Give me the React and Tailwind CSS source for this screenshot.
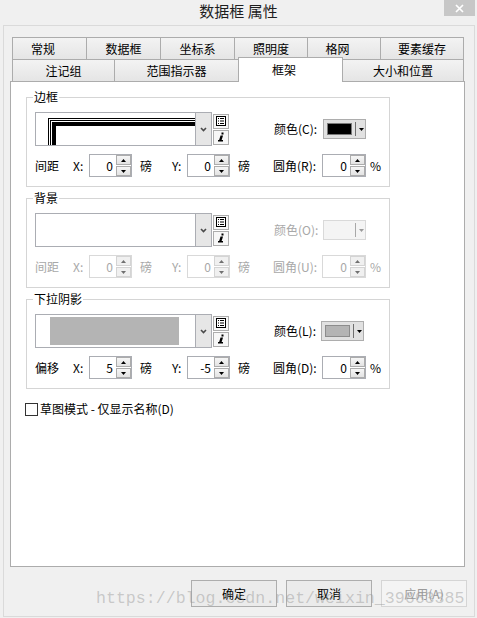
import React from "react";

// ─── Small drawing bits ───────────────────────────────────────────────────────
function Tri({ down = false, color = "#000" }) {
  return (
    <svg width="5" height="3" viewBox="0 0 5 3" className="block">
      <polygon points={down ? "0,0 5,0 2.5,3" : "0,3 5,3 2.5,0"} fill={color} />
    </svg>
  );
}

function Chevron() {
  return (
    <svg width="7" height="5" viewBox="0 0 7 5" className="block">
      <polyline points="1,1 3.5,3.5 6,1" fill="none" stroke="#4a4a4a" strokeWidth="1.6" />
    </svg>
  );
}

function ListIcon() {
  return (
    <svg width="10" height="10" viewBox="0 0 10 10" className="block">
      <rect x="0.5" y="0.5" width="9" height="9" fill="#fff" stroke="#000" />
      <rect x="2" y="2" width="1" height="1" fill="#000" />
      <rect x="4" y="2" width="4" height="1" fill="#000" />
      <rect x="2" y="4.5" width="1" height="1" fill="#000" />
      <rect x="4" y="4.5" width="4" height="1" fill="#000" />
      <rect x="2" y="7" width="1" height="1" fill="#000" />
      <rect x="4" y="7" width="4" height="1" fill="#000" />
    </svg>
  );
}

function InfoIcon() {
  return (
    <svg width="10" height="10" viewBox="0 0 10 10" className="block">
      <rect x="5.5" y="0.5" width="2" height="2" fill="#000" />
      <polygon points="4.5,3.5 7,3.5 5.6,8 3.1,8" fill="#000" />
      <rect x="2" y="8" width="5" height="1.5" fill="#000" />
    </svg>
  );
}

// ─── Controls ─────────────────────────────────────────────────────────────────
function SpinBox({ value, disabled = false, w = "w-[43px]" }) {
  return (
    <div className={`flex h-[23px] ${w} bg-white border ${disabled ? "border-[#d9d9d9]" : "border-[#abadb3]"}`}>
      <div className={`flex-1 pr-[3px] text-right leading-[21px] ${disabled ? "text-[#a8a8a8]" : "text-black"}`}>
        {value}
      </div>
      <div className="flex w-[15px] flex-col gap-px">
        <div className={`flex flex-1 items-center justify-center border ${disabled ? "border-[#d4d4d4] bg-[#f0f0f0]" : "border-[#acacac] bg-gradient-to-b from-[#f6f6f6] to-[#e3e3e3]"}`}>
          <Tri color={disabled ? "#707070" : "#000"} />
        </div>
        <div className={`flex flex-1 items-center justify-center border ${disabled ? "border-[#d4d4d4] bg-[#f0f0f0]" : "border-[#acacac] bg-gradient-to-b from-[#f6f6f6] to-[#e3e3e3]"}`}>
          <Tri down color={disabled ? "#707070" : "#000"} />
        </div>
      </div>
    </div>
  );
}

function Combo({ children }) {
  return (
    <div className="flex items-center">
      <div className="flex h-[34px] w-[177px] border border-[#abadb3] bg-white">
        <div className="flex-1 overflow-hidden">{children}</div>
        <div className="flex w-[16px] items-center justify-center border-l border-[#abadb3] bg-[#e6e6e6]">
          <Chevron />
        </div>
      </div>
      {/* symbol picker + properties */}
      <div className="ml-px flex flex-col gap-px">
        <div className="flex h-[15px] w-[16px] items-center justify-center border border-[#adadad] bg-[#f7f7f7]">
          <ListIcon />
        </div>
        <div className="flex h-[15px] w-[16px] items-center justify-center border border-[#adadad] bg-[#f7f7f7]">
          <InfoIcon />
        </div>
      </div>
    </div>
  );
}

function ColorButton({ swatch = "", disabled = false }) {
  return (
    <div className={`flex h-[20px] w-[43px] items-center border pl-[3px] ${disabled ? "border-[#d9d9d9] bg-[#f4f4f4]" : "border-[#adadad] bg-[#e1e1e1]"}`}>
      <div className={`h-[12px] w-[25px] ${swatch}`} />
      <div className={`ml-[3px] h-[14px] w-px ${disabled ? "bg-[#a8a8a8]" : "bg-[#6e6e6e]"}`} />
      <div className="ml-[3px]">
        <Tri down color={disabled ? "#9a9a9a" : "#000"} />
      </div>
    </div>
  );
}

function Group({ title, className = "", children }) {
  return (
    <fieldset className={`w-[364px] border border-[#d5d5d5] px-[8px] pt-[7px] pb-[9px] ${className}`}>
      <legend className="-ml-[2px] px-px leading-[16px] text-black">{title}</legend>
      {children}
    </fieldset>
  );
}

function OffsetRow({ name, x, y, cornerLabel, disabled = false }) {
  const tone = disabled ? "text-[#a8a8a8]" : "text-black";
  return (
    <div className={`mt-[8px] flex h-[23px] items-center whitespace-nowrap ${tone}`}>
      <span className="w-[38px]">{name}</span>
      <span className="w-[16px]">X:</span>
      <SpinBox value={x} disabled={disabled} />
      <span className="ml-[8px] w-[12px]">磅</span>
      <span className="ml-[20px] w-[15px]">Y:</span>
      <SpinBox value={y} disabled={disabled} />
      <span className="ml-[8px] w-[12px]">磅</span>
      <span className="ml-[23px] w-[49px]">{cornerLabel}</span>
      <SpinBox value="0" disabled={disabled} w="w-[44px]" />
      <span className="ml-[4px]">%</span>
    </div>
  );
}

// ─── Tabs ─────────────────────────────────────────────────────────────────────
const topTabs = [
  { label: "常规", w: "w-[75px] pr-[13px]" },
  { label: "数据框", w: "w-[75px]" },
  { label: "坐标系", w: "w-[75px]" },
  { label: "照明度", w: "w-[74px]" },
  { label: "格网", w: "w-[74px] pr-[13px]" },
  { label: "要素缓存", w: "w-[84px]" },
];

const bottomTabs = [
  { label: "注记组", w: "w-[103px]" },
  { label: "范围指示器", w: "w-[125px]" },
  { label: "框架", w: "w-[105px] pr-[13px]", selected: true },
  { label: "大小和位置", w: "w-[122px]" },
];

function Tab({ label, w, selected, first }) {
  if (selected) {
    return (
      <div className={`relative z-10 -ml-px -mt-[2px] flex h-[25px] items-center justify-center border border-b-0 border-[#acacac] bg-white pb-px leading-[16px] ${w}`}>
        {label}
      </div>
    );
  }
  return (
    <div className={`${first ? "" : "-ml-px"} flex h-[22px] items-center justify-center border border-b-0 border-[#acacac] bg-gradient-to-b from-[#f3f3f3] to-[#e5e5e5] leading-[16px] ${w}`}>
      {label}
    </div>
  );
}

export default function App() {
  return (
    <div className="relative h-[618px] w-[477px] overflow-hidden bg-[#f0f0f0] font-['Noto_Sans_CJK_SC','Liberation_Sans',sans-serif] text-[12px] text-black">
      {/* Title bar */}
      <div className="relative flex h-[25px] items-start justify-center">
        <div className="text-[15px] leading-[22px] text-[#1e1e1e]">数据框 属性</div>
        <div className="absolute right-[2px] top-0 flex h-[16px] w-[31px] items-center justify-center bg-[#c7c7c7]">
          <svg width="9" height="9" viewBox="0 0 9 9" className="block">
            <path d="M1 1L8 8M8 1L1 8" stroke="#fff" strokeWidth="1.7" />
          </svg>
        </div>
      </div>

      {/* Window body */}
      <div className="ml-[3px] h-[592px] w-[472px] border border-[#dadada] pl-[6px] pt-[11px]">
        <div className="ml-[2px] flex h-[22px]">
          {topTabs.map((t, i) => (
            <Tab key={t.label} {...t} first={i === 0} />
          ))}
        </div>
        <div className="ml-[2px] flex h-[22px] items-start">
          {bottomTabs.map((t, i) => (
            <Tab key={t.label} {...t} first={i === 0} />
          ))}
        </div>

        {/* Tab page */}
        <div className="h-[486px] w-[455px] border border-[#acacac] bg-white pl-[15px] pt-[7px]">
          <Group title="边框">
            <div className="flex h-[34px] items-center whitespace-nowrap">
              <Combo>
                <svg width="159" height="32" className="block">
                  <rect x="12" y="5" width="147" height="1" fill="#000" />
                  <rect x="12" y="5" width="1" height="27" fill="#000" />
                  <rect x="14" y="7" width="145" height="1" fill="#000" />
                  <rect x="14" y="7" width="1" height="25" fill="#000" />
                  <rect x="16" y="9" width="143" height="4" fill="#000" />
                  <rect x="16" y="9" width="4" height="23" fill="#000" />
                </svg>
              </Combo>
              <span className="ml-[45px] w-[49px]">颜色(C):</span>
              <ColorButton swatch="border border-[#7a7a7a] bg-black" />
            </div>
            <OffsetRow name="间距" x="0" y="0" cornerLabel="圆角(R):" />
          </Group>

          <Group title="背景" className="mt-[3px]">
            <div className="flex h-[34px] items-center whitespace-nowrap">
              <Combo />
              <span className="ml-[45px] w-[49px] text-[#a8a8a8]">颜色(O):</span>
              <ColorButton disabled />
            </div>
            <OffsetRow name="间距" x="0" y="0" cornerLabel="圆角(U):" disabled />
          </Group>

          <Group title="下拉阴影" className="mt-[3px]">
            <div className="flex h-[34px] items-center whitespace-nowrap">
              <Combo>
                <div className="ml-[14px] mt-[2px] h-[28px] w-[129px] bg-[#b4b4b4]" />
              </Combo>
              <span className="ml-[45px] w-[47px]">颜色(L):</span>
              <ColorButton swatch="border border-[#8c8c8c] bg-[#b4b4b4]" />
            </div>
            <OffsetRow name="偏移" x="5" y="-5" cornerLabel="圆角(D):" />
          </Group>

          <label className="-ml-px mt-[12px] flex h-[16px] items-center whitespace-nowrap">
            <span className="h-[13px] w-[13px] border border-[#333333] bg-white" />
            <span className="ml-[2px] leading-[16px]">草图模式 - 仅显示名称(D)</span>
          </label>
        </div>

        {/* Dialog buttons */}
        <div className="mt-[13px] flex justify-end gap-[9px] pr-[7px]">
          <button className="h-[27px] w-[86px] border border-[#adadad] bg-[#ebebeb] leading-[16px]">确定</button>
          <button className="h-[27px] w-[86px] border border-[#adadad] bg-[#ebebeb] leading-[16px]">取消</button>
          <button className="h-[27px] w-[86px] border border-[#d5d5d5] bg-[#f4f4f4] leading-[16px] text-[#9a9a9a]">应用(A)</button>
        </div>
      </div>

      {/* Watermark */}
      <div className="pointer-events-none absolute left-[96px] top-[589px] whitespace-nowrap font-['Liberation_Mono',monospace] text-[16.6px] leading-[20px] text-[#969696]/45">
        https://blog.csdn.net/weixin_39663385
      </div>
    </div>
  );
}
